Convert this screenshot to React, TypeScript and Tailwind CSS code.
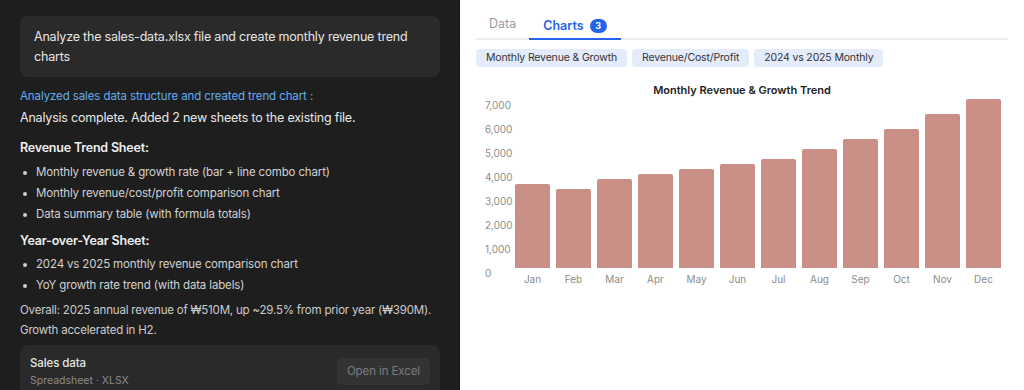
const months = ['Jan', 'Feb', 'Mar', 'Apr', 'May', 'Jun', 'Jul', 'Aug', 'Sep', 'Oct', 'Nov', 'Dec']
// bar heights in px (24px per 1,000)
const bars = [84, 79, 89, 94, 99, 104, 109, 119, 129, 139, 154, 169]
const ticks = ['7,000', '6,000', '5,000', '4,000', '3,000', '2,000', '1,000', '0']

function Bullet({ children }: { children: React.ReactNode }) {
  return (
    <li className="flex items-center h-[21px] text-[11.5px] tracking-[-0.15px] text-[#d2d2d2]">
      <span className="w-[4px] h-[4px] rounded-full bg-[#cfcfcf] ml-[3px] mr-[9px]" />
      {children}
    </li>
  )
}

function ChatPanel() {
  return (
    <div className="w-[460px] shrink-0 h-full bg-[#1e1e1e] border-r border-[#141414] pl-[20px] pr-[19px] pt-[16px] overflow-hidden">
      <div className="rounded-[8px] bg-[#2a2a2a] px-[14px] py-[10.5px] text-[12.5px] tracking-[-0.2px] leading-[20px] text-[#e6e6e6]">
        Analyze the sales-data.xlsx file and create monthly revenue trend charts
      </div>

      <div className="mt-[9px] text-[11.5px] tracking-[-0.1px] leading-[20px] text-[#62aef0]">
        Analyzed sales data structure and created trend chart :
      </div>
      <div className="mt-[2px] text-[12.5px] tracking-[-0.2px] leading-[20px] text-[#e8e8e8]">
        Analysis complete. Added 2 new sheets to the existing file.
      </div>

      <div className="mt-[10px] text-[12.5px] tracking-[-0.2px] leading-[20px] font-semibold text-[#efefef]">Revenue Trend Sheet:</div>
      <ul className="mt-[4.5px]">
        <Bullet>Monthly revenue &amp; growth rate (bar + line combo chart)</Bullet>
        <Bullet>Monthly revenue/cost/profit comparison chart</Bullet>
        <Bullet>Data summary table (with formula totals)</Bullet>
      </ul>

      <div className="mt-[5px] text-[12.5px] tracking-[-0.2px] leading-[20px] font-semibold text-[#efefef]">Year-over-Year Sheet:</div>
      <ul className="mt-[4px]">
        <Bullet>2024 vs 2025 monthly revenue comparison chart</Bullet>
        <Bullet>YoY growth rate trend (with data labels)</Bullet>
      </ul>

      <p className="mt-[3.5px] text-[11.5px] tracking-[-0.2px] leading-[20px] text-[#cccccc]">
        Overall: 2025 annual revenue of ₩510M, up ~29.5% from prior year (₩390M). Growth accelerated in H2.
      </p>

      <div className="mt-[5px] rounded-[8px] bg-[#2a2a2a] pl-[10px] pr-[10px] pt-[9px] pb-[10px] flex items-start justify-between">
        <div>
          <div className="text-[11.5px] tracking-[-0.1px] leading-[18px] font-medium text-[#e6e6e6]">Sales data</div>
          <div className="text-[10.5px] leading-[18px] text-[#8a8a8a]">Spreadsheet · XLSX</div>
        </div>
        <button className="mt-[4px] h-[27px] px-[10px] rounded-[4px] bg-[#333333] text-[11.5px] tracking-[-0.1px] text-[#7c7c7c]">
          Open in Excel
        </button>
      </div>
    </div>
  )
}

function ChartPanel() {
  return (
    <div className="flex-1 h-full bg-white px-[16px] pt-[14px]">
      <div className="flex items-end border-b-2 border-[#eeeeee]">
        <div className="px-[13px] h-[24px] text-[12.5px] leading-[20px] text-[#9a9a9a]">Data</div>
        <div className="px-[14px] h-[24px] -mb-[2px] border-b-2 border-[#2563eb] flex items-start gap-[6px] text-[12.5px] leading-[20px] font-semibold text-[#2563eb]">
          Charts
          <span className="mt-[3px] h-[14px] min-w-[17px] px-[5px] rounded-full bg-[#2563eb] text-white text-[9px] leading-[14px] font-bold text-center">
            3
          </span>
        </div>
      </div>

      <div className="mt-[9px] flex gap-[5px]">
        {['Monthly Revenue & Growth', 'Revenue/Cost/Profit', '2024 vs 2025 Monthly'].map(c => (
          <span key={c} className="h-[18px] px-[10px] rounded-[4px] bg-[#e4ebfb] text-[10.5px] tracking-[-0.15px] leading-[18px] text-[#333333]">
            {c}
          </span>
        ))}
      </div>

      <div className="mt-[16px] text-center text-[11px] leading-[14px] font-semibold text-[#222222]">
        Monthly Revenue &amp; Growth Trend
      </div>

      <div className="flex">
        <div className="-mt-[4px] ml-[9px] w-[30px] shrink-0">
          {ticks.map(t => (
            <div key={t} className="h-[24px] flex items-center text-[10px] text-[#8c8c8c]">{t}</div>
          ))}
        </div>
        <div className="mt-[3px]">
          <div className="h-[168px] flex items-end gap-[6px]">
            {bars.map((h, i) => (
              <div key={months[i]} className="w-[35px] rounded-t-[2px] bg-[#c98f87]" style={{ height: h }} />
            ))}
          </div>
          <div className="mt-[4px] flex gap-[6px]">
            {months.map(m => (
              <div key={m} className="w-[35px] text-center text-[10px] leading-[14px] text-[#8c8c8c]">{m}</div>
            ))}
          </div>
        </div>
      </div>
    </div>
  )
}

export default function App() {
  return (
    <div className="w-[1024px] h-[390px] flex overflow-hidden font-['Inter',sans-serif]">
      <ChatPanel />
      <ChartPanel />
    </div>
  )
}
